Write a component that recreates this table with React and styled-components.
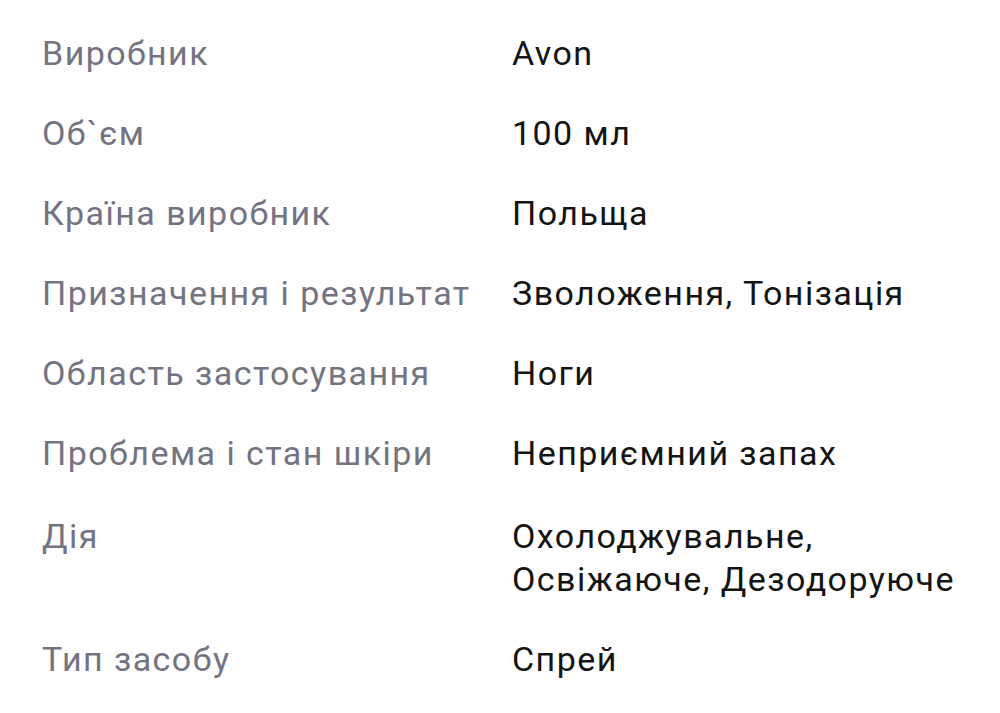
import React from "react";
import styled, { createGlobalStyle, css } from "styled-components";

const Global = createGlobalStyle`
  html, body { margin: 0; padding: 0; background: #ffffff; }
  body { font-family: Roboto, "Noto Sans", sans-serif; -webkit-font-smoothing: antialiased; }
`;

const Table = styled.dl`
  margin: 0;
  padding: 32px 12px 20px 42px;
  display: grid;
  grid-template-columns: 470px 1fr;
  row-gap: 37px;
  font-size: 34px;
  line-height: 43px;
  letter-spacing: 1.45px;
`;

const multi = css`
  ${(p) =>
    p.$multi &&
    css`
      padding-top: 3px;
    `}
`;

const Label = styled.dt`
  margin: 0;
  color: #737382;
  font-weight: 400;
  ${multi}
`;

const Value = styled.dd`
  margin: 0;
  color: #141414;
  font-weight: 400;
  ${multi}
`;

const rows = [
  ["Виробник", "Avon"],
  ["Об`єм", "100 мл"],
  ["Країна виробник", "Польща"],
  ["Призначення і результат", "Зволоження, Тонізація"],
  ["Область застосування", "Ноги"],
  ["Проблема і стан шкіри", "Неприємний запах"],
  ["Дія", "Охолоджувальне, Освіжаюче, Дезодоруюче", true],
  ["Тип засобу", "Спрей"],
];

export default function App() {
  return (
    <>
      <Global />
      <Table>
        {rows.map(([l, v, m]) => (
          <React.Fragment key={l}>
            <Label $multi={m}>{l}</Label>
            <Value $multi={m}>{v}</Value>
          </React.Fragment>
        ))}
      </Table>
    </>
  );
}
